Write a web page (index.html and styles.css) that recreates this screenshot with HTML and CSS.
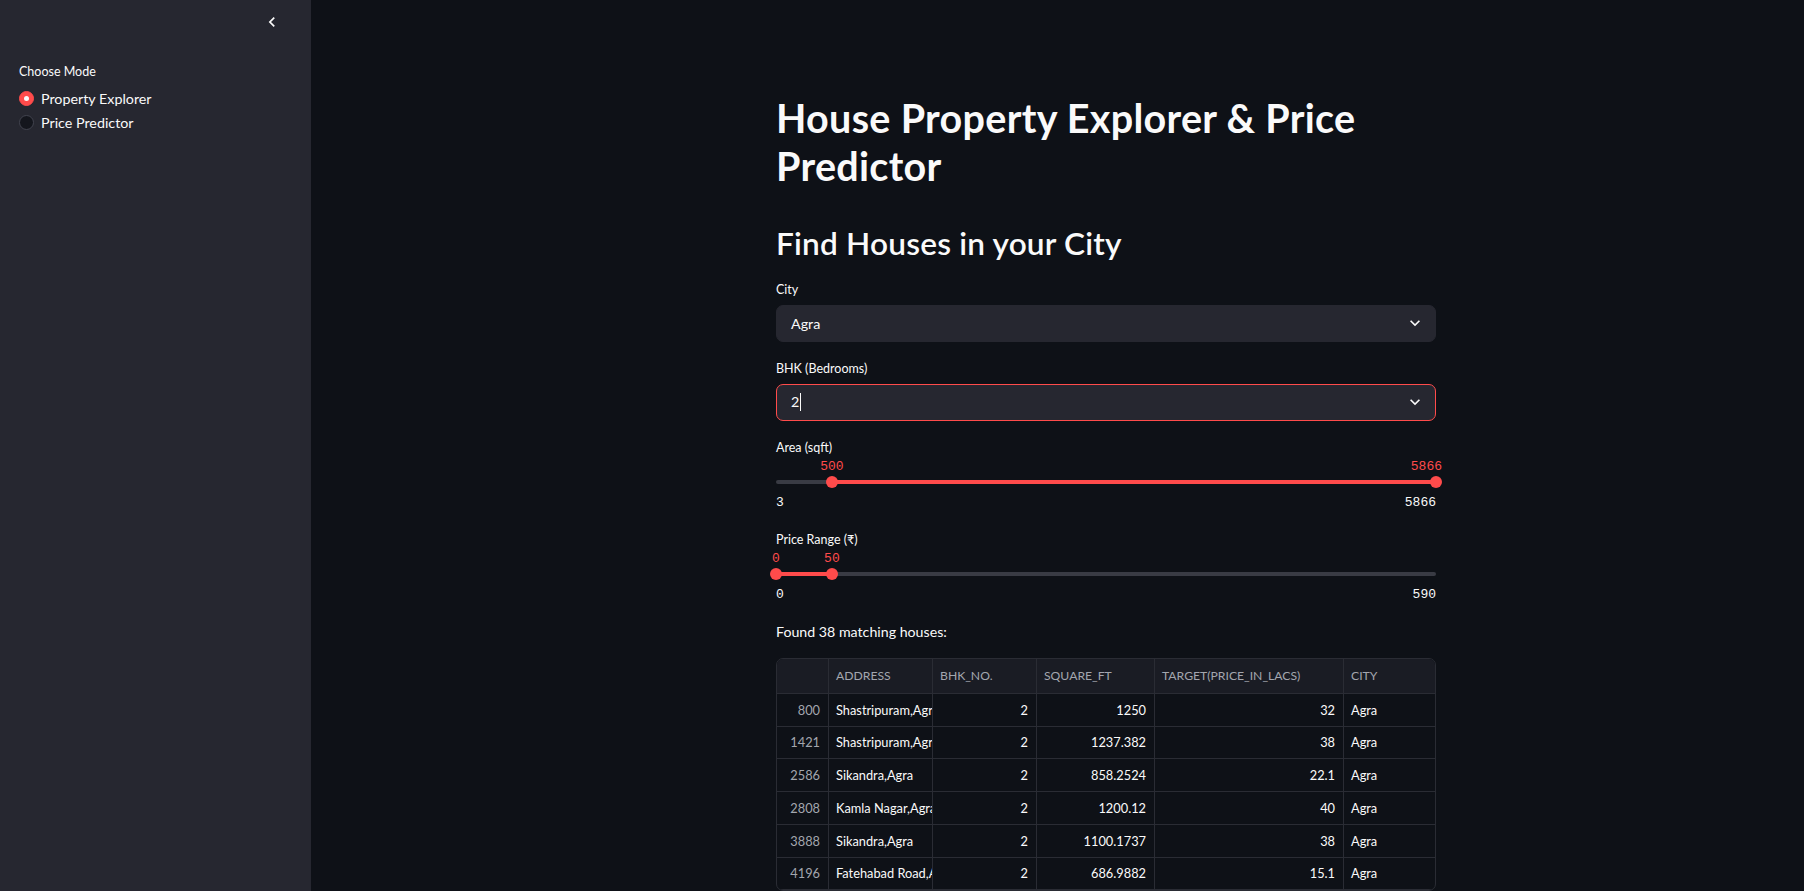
FILE: index.html
```html
<!DOCTYPE html>
<html lang="en">
<head>
<meta charset="utf-8">
<title>House Property Explorer &amp; Price Predictor</title>
<link rel="stylesheet" href="styles.css">
</head>
<body>
<div class="app">
  <aside class="sidebar">
    <div class="sidebar-top">
      <button class="collapse" aria-label="Collapse sidebar">
        <svg viewBox="0 0 24 24" width="20" height="20"><path d="M15.41 7.41L14 6l-6 6 6 6 1.41-1.41L10.83 12z" fill="#fafafa"/></svg>
      </button>
    </div>
    <div class="sb-content">
      <div class="label">Choose Mode</div>
      <div class="radio-group">
        <div class="radio checked"><span class="dot"></span><span>Property Explorer</span></div>
        <div class="radio"><span class="dot"></span><span>Price Predictor</span></div>
      </div>
    </div>
  </aside>
  <main class="main">
    <div class="block">
      <h1>House Property Explorer &amp; Price Predictor</h1>
      <h2>Find Houses in your City</h2>

      <div class="field">
        <div class="label">City</div>
        <div class="select">
          <span>Agra</span>
          <svg viewBox="0 0 24 24" width="20" height="20"><path d="M16.59 8.59L12 13.17 7.41 8.59 6 10l6 6 6-6z" fill="#fafafa"/></svg>
        </div>
      </div>

      <div class="field">
        <div class="label">BHK (Bedrooms)</div>
        <div class="select focused">
          <span>2<span class="caret"></span></span>
          <svg viewBox="0 0 24 24" width="20" height="20"><path d="M16.59 8.59L12 13.17 7.41 8.59 6 10l6 6 6-6z" fill="#fafafa"/></svg>
        </div>
      </div>

      <div class="field slider">
        <div class="label">Area (sqft)</div>
        <div class="slider-vals">
          <span class="val" style="left:8.477%">500</span>
          <span class="val val-end" style="left:100%">5866</span>
        </div>
        <div class="track">
          <div class="fill" style="left:8.477%; right:0%"></div>
          <span class="thumb" style="left:8.477%"></span>
          <span class="thumb" style="left:100%"></span>
        </div>
        <div class="minmax"><span>3</span><span>5866</span></div>
      </div>

      <div class="field slider">
        <div class="label">Price Range (₹)</div>
        <div class="slider-vals">
          <span class="val" style="left:0%">0</span>
          <span class="val" style="left:8.475%">50</span>
        </div>
        <div class="track">
          <div class="fill" style="left:0%; right:91.525%"></div>
          <span class="thumb" style="left:0%"></span>
          <span class="thumb" style="left:8.475%"></span>
        </div>
        <div class="minmax"><span>0</span><span>590</span></div>
      </div>

      <p class="found">Found 38 matching houses:</p>

      <div class="grid-wrap">
        <div class="grid">
          <div class="hc"></div>
          <div class="hc">ADDRESS</div>
          <div class="hc">BHK_NO.</div>
          <div class="hc">SQUARE_FT</div>
          <div class="hc">TARGET(PRICE_IN_LACS)</div>
          <div class="hc">CITY</div>

          <div class="c idx">800</div><div class="c txt">Shastripuram,Agra</div><div class="c num">2</div><div class="c num">1250</div><div class="c num">32</div><div class="c txt">Agra</div>
          <div class="c idx">1421</div><div class="c txt">Shastripuram,Agra</div><div class="c num">2</div><div class="c num">1237.382</div><div class="c num">38</div><div class="c txt">Agra</div>
          <div class="c idx">2586</div><div class="c txt">Sikandra,Agra</div><div class="c num">2</div><div class="c num">858.2524</div><div class="c num">22.1</div><div class="c txt">Agra</div>
          <div class="c idx">2808</div><div class="c txt">Kamla Nagar,Agra</div><div class="c num">2</div><div class="c num">1200.12</div><div class="c num">40</div><div class="c txt">Agra</div>
          <div class="c idx">3888</div><div class="c txt">Sikandra,Agra</div><div class="c num">2</div><div class="c num">1100.1737</div><div class="c num">38</div><div class="c txt">Agra</div>
          <div class="c idx">4196</div><div class="c txt">Fatehabad Road,Agra</div><div class="c num">2</div><div class="c num">686.9882</div><div class="c num">15.1</div><div class="c txt">Agra</div>
        </div>
      </div>
    </div>
  </main>
</div>
</body>
</html>
```

FILE: styles.css
```css
* { box-sizing: border-box; }

html, body {
  margin: 0;
  height: 891px;
  overflow: hidden;
}

body {
  background: #0e1117;
  color: #fafafa;
  font-family: Lato, "Noto Sans", sans-serif;
}

.app {
  display: flex;
  height: 891px;
}

/* ---------- sidebar ---------- */
.sidebar {
  flex: 0 0 311px;
  width: 311px;
  background: #262730;
  padding: 12px 29px 0 19px;
}

.sidebar-top {
  display: flex;
  justify-content: flex-end;
  height: 20px;
}

.collapse {
  border: 0;
  background: none;
  padding: 0;
  width: 20px;
  height: 20px;
  display: block;
}

.collapse svg { display: block; }

.sb-content { margin-top: 31px; }

.label {
  font-size: 12.5px;
  line-height: 17px;
  height: 17px;
  color: #fafafa;
}

.radio-group {
  margin-top: 6px;
  display: flex;
  flex-direction: column;
}

.radio {
  display: flex;
  align-items: center;
  gap: 7px;
  height: 24px;
  font-size: 14.3px;
}

.dot {
  width: 15px;
  height: 15px;
  border-radius: 50%;
  background: #14161d;
  border: 1px solid #42444f;
  flex: 0 0 15px;
  display: flex;
  align-items: center;
  justify-content: center;
}

.radio.checked .dot {
  background: #ff4b4b;
  border-color: #ff4b4b;
}

.radio.checked .dot::after {
  content: "";
  width: 5px;
  height: 5px;
  border-radius: 50%;
  background: #fafafa;
}

/* ---------- main ---------- */
.main {
  flex: 1;
  padding: 94px 0 0 465px;
}

.block { width: 660px; }

h1 {
  margin: 0;
  font-size: 39.5px;
  line-height: 48.4px;
  font-weight: 700;
  letter-spacing: 0.3px;
}

h2 {
  margin: 32px 0 0;
  font-size: 31.6px;
  line-height: 40px;
  font-weight: 600;
  letter-spacing: 0.2px;
}

.field { margin-top: 18px; }

.select {
  margin-top: 7px;
  height: 37px;
  background: #262730;
  border: 1px solid #262730;
  border-radius: 7px;
  display: flex;
  align-items: center;
  justify-content: space-between;
  padding: 0 10px 0 14px;
  font-size: 14.3px;
}

.select svg { display: block; }

.select.focused { border-color: #ff4b4b; }

.caret {
  display: inline-block;
  width: 0;
  height: 18px;
  border-left: 1.5px solid #fafafa;
  vertical-align: -4px;
  margin-left: 1px;
}

/* ---------- slider ---------- */
.slider { padding-bottom: 2px; }

.slider-vals {
  position: relative;
  height: 16px;
  margin-top: 3px;
  font-family: "Liberation Mono", "DejaVu Sans Mono", monospace;
  font-size: 13px;
  line-height: 16px;
  color: #ff4b4b;
}

.val {
  position: absolute;
  top: 0;
  transform: translateX(-50%);
  white-space: nowrap;
}

.val-end { transform: translateX(calc(-100% + 6px)); }

.track {
  position: relative;
  margin-top: 5px;
  height: 4px;
  border-radius: 2px;
  background: #393b44;
}

.fill {
  position: absolute;
  top: 0;
  bottom: 0;
  background: #ff4b4b;
}

.thumb {
  position: absolute;
  top: 50%;
  width: 12px;
  height: 12px;
  border-radius: 50%;
  background: #ff4b4b;
  transform: translate(-50%, -50%);
}

.minmax {
  display: flex;
  justify-content: space-between;
  margin-top: 11px;
  font-family: "Liberation Mono", "DejaVu Sans Mono", monospace;
  font-size: 13px;
  line-height: 16px;
}

.found {
  margin: 17px 0 0;
  font-size: 14.2px;
  line-height: 20px;
}

/* ---------- data grid ---------- */
.grid-wrap {
  margin-top: 16px;
  border: 1px solid #2a2c34;
  border-radius: 7px;
  overflow: hidden;
}

.grid {
  display: grid;
  grid-template-columns: 52px 104px 104px 118px 189px 1fr;
  grid-template-rows: 35px;
  grid-auto-rows: 32.75px;
  font-size: 12.8px;
}

.hc, .c {
  border-right: 1px solid #2a2c34;
  border-bottom: 1px solid #2a2c34;
  display: flex;
  align-items: center;
  white-space: nowrap;
  overflow: hidden;
}

.hc:nth-child(6n), .c:nth-child(6n) { border-right: 0; }

.hc {
  background: #1a1c24;
  color: #a3a6ae;
  padding-left: 7px;
  font-size: 12.2px;
}

.idx {
  justify-content: flex-end;
  padding-right: 8px;
  color: #a3a6ae;
}

.txt { padding-left: 7px; }

.num {
  justify-content: flex-end;
  padding-right: 8px;
}
```
